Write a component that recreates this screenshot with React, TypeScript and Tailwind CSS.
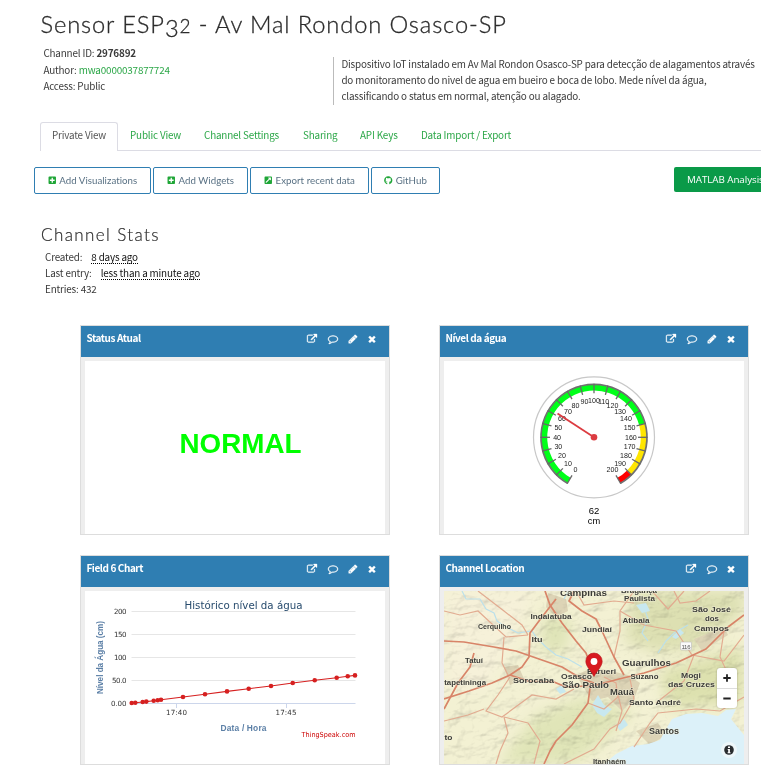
import React from 'react';
import { FaPlusSquare, FaExternalLinkSquareAlt, FaGithub } from 'react-icons/fa';

const LINK =
  'M1408 928v320q0 119-84.5 203.5t-203.5 84.5h-832q-119 0-203.5-84.5t-84.5-203.5v-832q0-119 84.5-203.5t203.5-84.5h704q14 0 23 9t9 23v64q0 14-9 23t-23 9h-704q-66 0-113 47t-47 113v832q0 66 47 113t113 47h832q66 0 113-47t47-113v-320q0-14 9-23t23-9h64q14 0 23 9t9 23zm384-864v512q0 26-19 45t-45 19-45-19l-176-176-652 652q-10 10-23 10t-23-10l-114-114q-10-10-10-23t10-23l652-652-176-176q-19-19-19-45t19-45 45-19h512q26 0 45 19t19 45z';
const COMMENT =
  'M896 384q-204 0-381.5 69.5t-282 187.5-104.5 255q0 112 71.5 213.5t201.5 175.5l87 50-27 96q-24 91-70 172 152-63 275-171l43-38 57 6q69 8 130 8 204 0 381.5-69.5t282-187.5 104.5-255-104.5-255-282-187.5-381.5-69.5zm896 512q0 174-120 321.5t-326 233-450 85.5q-70 0-145-8-198 175-460 242-49 14-114 22h-5q-15 0-27-10.5t-16-27.5v-1q-3-4-.5-12t2-10 4.5-9.5l6-9 7-8.5 8-9q7-8 31-34.5t34.5-38 31-39.5 32.5-51 27-59 26-76q-157-89-247.5-220t-90.5-281q0-174 120-321.5t326-233 450-85.5 450 85.5 326 233 120 321.5z';
const PENCIL =
  'M491 1536l91-91-235-235-91 91v107h128v128h107zm523-928q0-22-22-22-10 0-17 7l-542 542q-7 7-7 17 0 22 22 22 10 0 17-7l542-542q7-7 7-17zm-54-192l416 416-832 832h-416v-416zm683 96q0 53-37 90l-166 166-416-416 166-165q36-38 90-38 53 0 91 38l235 234q37 39 37 91z';
const TIMES =
  'M1490 1322q0 40-28 68l-136 136q-28 28-68 28t-68-28l-294-294-294 294q-28 28-68 28t-68-28l-136-136q-28-28-28-68t28-68l294-294-294-294q-28-28-28-68t28-68l136-136q28-28 68-28t68 28l294 294 294-294q28-28 68-28t68 28l136 136q28 28 28 68t-28 68l-294 294 294 294q28 28 28 68z';

function Icon({ d, shift = '' }: { d: string; shift?: string }) {
  return (
    <svg viewBox="0 0 1792 1792" className={`h-[10px] w-[10px] overflow-visible fill-white stroke-white ${shift}`} strokeWidth="60">
      <path d={d} />
    </svg>
  );
}

function Card({ title, editable = true, children }: { title: string; editable?: boolean; children: React.ReactNode }) {
  return (
    <section className="flex h-[210px] w-[310px] flex-col border border-[#ddd] bg-[#eee]">
      <header className="flex h-[31px] shrink-0 justify-between bg-[#2f7eb2] pr-[12.5px] pl-[5.4px]">
        <h3 className="mt-[4px] text-[10px] leading-[16px] font-bold tracking-[-0.42px] whitespace-nowrap text-white">{title}</h3>
        <div className="mt-[8px] flex gap-[10px]">
          <Icon d={LINK} />
          <Icon d={COMMENT} shift="ml-[1px]" />
          {editable && <Icon d={PENCIL} />}
          <Icon d={TIMES} shift="-ml-[1px]" />
        </div>
      </header>
      <div className="mx-[4px] mt-[4px] flex-1 overflow-hidden bg-white tracking-normal">{children}</div>
    </section>
  );
}

const GX = 150;
const GY = 76.3;
const polar = (r: number, value: number) => {
  const a = ((value * 1.5 - 150) * Math.PI) / 180;
  return [GX + r * Math.sin(a), GY - r * Math.cos(a)];
};
const arc = (r: number, from: number, to: number) => {
  const [x1, y1] = polar(r, from);
  const [x2, y2] = polar(r, to);
  return `M${x1} ${y1}A${r} ${r} 0 ${to - from > 120 ? 1 : 0} 1 ${x2} ${y2}`;
};

function Gauge() {
  const values = Array.from({ length: 21 }, (_, i) => i * 10);
  const [nx, ny] = polar(43.5, 62);
  return (
    <svg width="300" height="173" className="block font-['Liberation_Sans',sans-serif]">
      <circle cx={GX} cy={GY} r="60.5" fill="#fff" stroke="#c8c8c8" strokeWidth="1.2" />
      <path d={arc(49.8, 0, 150)} fill="none" stroke="#00ff19" strokeWidth="6" />
      <path d={arc(49.8, 150, 190)} fill="none" stroke="#ffe600" strokeWidth="6" />
      <path d={arc(49.8, 190, 200)} fill="none" stroke="#f00" strokeWidth="6" />
      <path d={arc(53, 0, 200)} fill="none" stroke="#707070" strokeWidth="1.7" />
      {values.map((v) => {
        const [x1, y1] = polar(53.6, v);
        const [x2, y2] = polar(44, v);
        return <line key={v} x1={x1} y1={y1} x2={x2} y2={y2} stroke="#686868" strokeWidth="1.3" />;
      })}
      {values.map((v) => {
        const [x, y] = polar(36.9, v);
        return (
          <text key={v} x={x} y={y + 2.6} textAnchor="middle" fontSize="7.1" fill="#222">
            {v}
          </text>
        );
      })}
      <line x1={GX} y1={GY} x2={nx} y2={ny} stroke="#dc3c41" strokeWidth="1.8" />
      <circle cx={GX} cy={GY} r="3.3" fill="#dc3c41" />
      <text x="150" y="152.5" textAnchor="middle" fontSize="9.5">62</text>
      <text x="150" y="163" textAnchor="middle" fontSize="9.3">cm</text>
    </svg>
  );
}

const POINTS = [
  [46.7, 112], [50.3, 111.7], [57.7, 111], [61.3, 110.6], [68.7, 109.7], [72.7, 109.3], [76, 108.7],
  [98, 106], [120, 103.3], [142, 100.4], [163.7, 97.7], [186, 95], [207.7, 92], [229.7, 89.3],
  [251.7, 86.7], [262.7, 85.3], [270, 84.4],
];

function Chart() {
  const rows: [string, number, number][] = [
    ['200', 20.5, 12.5], ['150', 43.5, 12.5], ['100', 66.5, 12.5], ['50.0', 89.5, 14.5], ['0.00', 112.5, 15.5],
  ];
  return (
    <svg width="300" height="173" className="block font-['DejaVu_Sans',sans-serif]">
      {rows.map(([label, y, w]) => (
        <g key={label}>
          <line x1="46.5" x2="270.5" y1={y} y2={y} stroke={y > 110 ? '#ccd6eb' : '#e6e6e6'} />
          <text x="41.5" y={y + 2.5} textAnchor="end" fontSize="7.1" textLength={w} fill="#333">{label}</text>
        </g>
      ))}
      <path d="M91.5 113v4M201.5 113v4" stroke="#ccd6eb" />
      <text x="81" y="124" fontSize="7.1" textLength="21" fill="#333">17:40</text>
      <text x="190.5" y="124" fontSize="7.1" textLength="21" fill="#333">17:45</text>
      <text x="99.5" y="18" fontSize="11" textLength="118" lengthAdjust="spacingAndGlyphs" fill="#274b6d">Histórico nível da água</text>
      <text transform="translate(17.5 103) rotate(-90)" fontSize="8.4" fontWeight="bold" textLength="73" className="font-['Liberation_Sans',sans-serif]" lengthAdjust="spacingAndGlyphs" fill="#5b7fa6">Nível da Água (cm)</text>
      <text x="135.5" y="140" fontSize="8.4" fontWeight="bold" textLength="46" className="font-['Liberation_Sans',sans-serif]" fill="#5b7fa6">Data / Hora</text>
      <text x="216.5" y="146" fontSize="7" textLength="54" lengthAdjust="spacingAndGlyphs" fill="#c00">ThingSpeak.com</text>
      <polyline points={POINTS.map((p) => p.join(',')).join(' ')} fill="none" stroke="#d62020" strokeWidth="1.1" />
      {POINTS.map(([x, y]) => (
        <circle key={x} cx={x} cy={y} r="2.3" fill="#d62020" />
      ))}
    </svg>
  );
}

const ROADS_MAJOR = [
  'M0 50L20 51 50 56 72 60 95 68 118 76 138 88 150 92',
  'M101 0L106 14 118 32 132 50 142 62 150 84',
  'M112 8L98 26 86 42 85 66 78 76 66 84 48 92 25 100 0 108',
  'M66 84L84 90 110 91 122 96 140 95 152 94 175 88 200 82 232 72 262 58 284 36 300 24',
  'M146 97L144 112 128 134 112 150 106 160 100 173',
  'M130 0L125 10 138 20 152 28 158 40 170 66 180 84',
  'M0 118L14 92 26 76 30 62',
];
const ROADS_MINOR = [
  'M0 20L16 24 34 20 62 46 84 44', 'M34 0L60 20 78 34 84 44', 'M60 46L58 72 64 84',
  'M66 86L54 104 42 120 58 126 88 104 112 108 130 98', 'M0 130L24 124 40 118', 'M60 126L64 142 56 160 52 173',
  'M60 126L84 132 96 150 90 173', 'M170 66L176 40 176 20 190 0', 'M176 20L200 34 232 40 248 64 280 70 300 44',
  'M144 112L160 118 174 106 172 92 160 86', 'M172 96L178 120 172 140', 'M186 88L190 108 176 132 166 138 150 158 120 173',
  'M190 156L206 132 214 122 252 118 276 120 300 106', 'M250 64L240 90 212 112', 'M230 0L236 12 252 10 266 0',
  'M208 0L224 18 240 0', 'M280 40L276 66 292 100', 'M132 0L140 14 170 10 190 12',
];
const RIVERS = [
  'M18 0L22 8 36 8 42 18 50 22 53 30 62 36 74 42 88 40 92 46 102 56 112 64 124 68 138 76',
  'M200 16L204 28 198 42 204 50', 'M214 62L222 50 230 42 244 34', 'M124 0L120 8',
];
const PLACES: [string, number, number, number, number][] = [
  ['Campinas', 116, 4.5, 47, 8.5], ['Bragança', 177, 1.5, 36, 7.4], ['Paulista', 180, 9.5, 31, 7.6],
  ['Indaiatuba', 86.5, 28, 41, 7.6], ['Atibaia', 178.5, 31.5, 27, 7.6], ['São José', 248, 20.5, 39, 8],
  ['dos', 261, 30, 14, 8], ['Campos', 250, 39.5, 35, 8], ['Cerquilho', 34, 38, 33, 7.5],
  ['Jundiaí', 138, 41, 30, 8], ['Itu', 87.5, 51, 11, 7.7], ['Tatuí', 21, 72, 18, 7.5],
  ['Guarulhos', 178, 75, 49, 9.6], ['Barueri', 143, 83, 29, 7.6], ['Osasco', 117, 87.5, 31, 8],
  ['São Paulo', 118, 96.5, 47, 9.2], ['Sorocaba', 69, 91.5, 41, 8], ['Itapetininga', -2, 93.5, 44, 7.6],
  ['Suzano', 186.5, 87.5, 28, 7.7], ['Mogi', 237, 86.5, 20, 8], ['das Cruzes', 224, 96, 47, 8],
  ['Mauá', 166, 104, 24, 8.2], ['Santo André', 185, 114, 52, 8], ['Santos', 205, 143, 30, 8.4],
  ['Itanhaém', 149, 172.5, 33, 7.4], ['to', 0.5, 149, 8, 7.5],
];

function MapView() {
  return (
    <div className="relative h-[173px] w-[300px]">
      <svg width="300" height="173" className="block font-['Liberation_Sans',sans-serif]">
        <defs>
          <filter id="relief" x="0" y="0" width="100%" height="100%">
            <feTurbulence type="fractalNoise" baseFrequency="0.05 0.08" numOctaves="4" seed="8" result="n" />
            <feDiffuseLighting in="n" surfaceScale="5" diffuseConstant="1.15" lightingColor="#fff">
              <feDistantLight azimuth="225" elevation="60" />
            </feDiffuseLighting>
          </filter>
          <filter id="soft" x="-20%" y="-20%" width="140%" height="140%">
            <feGaussianBlur stdDeviation="7" />
          </filter>
        </defs>
        <rect width="300" height="173" fill="#f3f1d3" />
        <g filter="url(#soft)">
          <path d="M0 0H90L70 50 40 100H0Z" fill="#f6f1d9" />
          <path d="M55 173L90 125 140 105 190 120 160 150 130 173Z" fill="#e0e5b8" />
          <path d="M190 0H300V20L260 55 215 62 180 50Z" fill="#dde0b2" />
          <path d="M215 80L300 55V112L225 118Z" fill="#dde1af" />
          <path d="M100 22L128 28 122 62 96 60Z" fill="#dfe4b7" />
        </g>
        <g fill="#ddd4b6">
          <path d="M132 84L150 76 184 84 196 92 190 108 178 120 164 106 148 110Z" />
          <path d="M104 2L122 8 124 20 112 26 102 16Z" />
          <path d="M60 76L74 74 80 88 66 94Z" />
          <path d="M250 48L280 36 284 44 258 60Z" />
          <path d="M192 140L214 132 222 144 206 154Z" />
        </g>
        <rect width="300" height="173" filter="url(#relief)" className="opacity-30 mix-blend-multiply" />
        <g fill="none" stroke="#bce0ea" strokeWidth="1.2">
          {RIVERS.map((d) => <path key={d} d={d} />)}
        </g>
        <g fill="#c8e8ef">
          <path d="M112 98L118 94 122 101 116 103Z" />
          <path d="M148 114L154 104 160 114 168 118 160 126 153 122Z" />
          <path d="M172 134L180 128 184 134 176 140Z" />
          <path d="M192 14L202 12 206 20 198 22Z" />
          <path d="M228 46L236 38 240 42 232 48Z" />
        </g>
        <path d="M160 173L172 163 188 155 204 153 216 149 222 138 228 128 242 123 258 122 274 125 282 119 292 118 287 128 300 144V173Z" fill="#dcf1f9" />
        <g fill="none" stroke="#e2ab90" strokeWidth="1.2">
          {ROADS_MINOR.map((d) => <path key={d} d={d} />)}
        </g>
        <g fill="none" stroke="#d88468" strokeWidth="1.7" strokeLinejoin="round">
          {ROADS_MAJOR.map((d) => <path key={d} d={d} />)}
        </g>
        <rect x="236.5" y="51" width="11" height="8" rx="1" fill="#fafafa" stroke="#bbb" strokeWidth=".6" />
        <text x="237.5" y="57.5" fontSize="6" textLength="9" fill="#555">116</text>
        <g fill="#3c3c38" stroke="#f5f3dd" strokeWidth="1.2" strokeOpacity=".65" fontWeight="bold" className="[paint-order:stroke]">
          {PLACES.map(([name, x, y, w, size]) => (
            <text key={name} x={x} y={y} fontSize={size} textLength={w} lengthAdjust="spacingAndGlyphs">{name}</text>
          ))}
        </g>
        <path d="M150 85.5C147 79.5 141.8 75.5 141.8 70.2a8.2 8.2 0 0 1 16.4 0C158.2 75.5 153 79.5 150 85.5Z" fill="#d71920" stroke="#b5161c" strokeWidth=".6" />
        <circle cx="150" cy="70.5" r="3.4" fill="#fff" />
      </svg>
      <div className="absolute top-[77px] left-[273px] h-[40px] w-[20px] rounded-[3px] bg-white shadow-[0_0_2px_rgba(0,0,0,0.3)]">
        <svg viewBox="0 0 20 40" className="h-[40px] w-[20px]">
          <path d="M6.3 10h7.4M10 6.3v7.4M6.3 30.5h7.4" stroke="#222" strokeWidth="1.8" />
          <path d="M0 20.5h20" stroke="#ddd" />
        </svg>
      </div>
      <svg viewBox="0 0 16 16" className="absolute top-[151px] left-[277px] h-[16px] w-[16px]">
        <circle cx="8" cy="8" r="8" fill="#eef7fa" />
        <circle cx="8" cy="8" r="4.8" fill="#2a2d30" />
        <path d="M7 4.6h2v1.5H7zM6.7 7h2.2v3.2h.6v1H6.6v-1h.6V8h-.5z" fill="#fff" />
      </svg>
    </div>
  );
}

function ToolButton({ icon, label, width }: { icon: React.ReactNode; label: string; width: string }) {
  return (
    <button className={`flex h-[27px] shrink-0 items-center justify-center gap-[3px] rounded-[2px] border border-[#2f7eb2] bg-white font-['Lato',sans-serif] text-[9.7px] tracking-[0.04px] whitespace-nowrap text-[#587083] ${width}`}>
      <span className="text-[8.5px] leading-none text-[#1fa637] [&>svg]:block">{icon}</span>
      <span className="-mt-px">{label}</span>
    </button>
  );
}

export default function App() {
  return (
    <div className="h-[775px] w-[761px] overflow-hidden bg-white font-['Noto_Sans_CJK_SC','Open_Sans',sans-serif] text-[9.9px] leading-[16px] tracking-[-0.17px] text-[#3a3a3a]">
      <h1 className="flex h-[46px] items-baseline pt-[8px] pl-[40.5px] font-['Lato',sans-serif] text-[23.7px] leading-[32px] font-light tracking-[0.88px] whitespace-pre text-[#2c2c2c] [-webkit-text-stroke:0.3px_#2c2c2c]">
        Sensor ESP<span className="translate-y-[4px]">3</span><span className="text-[19px]">2</span> - Av Mal Rondon Osasco-SP
      </h1>
      <div className="flex h-[76px]">
        <div className="-mt-[1px] w-[333px] shrink-0 pl-[43.4px] leading-[16.5px]">
          <p>Channel ID: <b>2976892</b></p>
          <p>Author: <span className="text-[#2ca748]">mwa0000037877724</span></p>
          <p>Access: Public</p>
        </div>
        <div className="mt-[11px] h-[48px] shrink-0 border-l border-[#bbb] pl-[7.4px] whitespace-nowrap">
          <p className="-mt-[1px]">
            Dispositivo IoT instalado em Av Mal Rondon Osasco-SP para detecção de alagamentos através<br />
            do monitoramento do nivel de agua em bueiro e boca de lobo. Mede nível da água,<br />
            classificando o status em normal, atenção ou alagado.
          </p>
        </div>
      </div>
      <nav className="ml-[40px] flex h-[29px] border-b border-[#dcdce4] leading-[27px] whitespace-nowrap text-[#2ca748]">
        <span className="h-[29px] w-[78px] rounded-t-[3px] border border-b-0 border-[#dcdce4] bg-white text-center leading-[24px] text-[#555]">Private View</span>
        <span className="w-[74px] pl-[12px]">Public View</span>
        <span className="w-[99px] pl-[12px]">Channel Settings</span>
        <span className="w-[57px] pl-[12px]">Sharing</span>
        <span className="w-[61px] pl-[12px]">API Keys</span>
        <span className="pl-[12px]">Data Import / Export</span>
      </nav>
      <div className="flex h-[71px] gap-[2px] pt-[16px] pl-[34px]">
        <ToolButton width="w-[117px]" icon={<FaPlusSquare />} label="Add Visualizations" />
        <ToolButton width="w-[95px]" icon={<FaPlusSquare />} label="Add Widgets" />
        <ToolButton width="w-[119px]" icon={<FaExternalLinkSquareAlt />} label="Export recent data" />
        <ToolButton width="w-[69px]" icon={<FaGithub />} label="GitHub" />
        <button className="ml-[232px] h-[25px] w-[100px] shrink-0 rounded-[2px] bg-[#0a9a48] pl-[13px] text-left font-['Open_Sans',sans-serif] text-[9.8px] tracking-[-0.05px] whitespace-nowrap text-white">MATLAB Analysis</button>
      </div>
      <h2 className="h-[27px] pt-[2px] pl-[41px] font-['Lato',sans-serif] text-[17px] leading-[22px] font-light tracking-[1.4px] text-[#2c2c2c] [-webkit-text-stroke:0.2px_#2c2c2c]">Channel Stats</h2>
      <div className="h-[76px] pl-[45px] whitespace-nowrap">
        <p className="flex h-[16px] gap-[9px]">Created: <span className="h-[15px] border-b border-dotted border-black text-[#111]">8 days ago</span></p>
        <p className="flex h-[16px] gap-[9px]">Last entry: <span className="h-[15px] border-b border-dotted border-black text-[#111]">less than a minute ago</span></p>
        <p>Entries: 432</p>
      </div>
      <main className="grid grid-cols-[310px_310px] gap-x-[49px] gap-y-[20px] pl-[80px]">
        <Card title="Status Atual">
          <div className="flex h-[165px] items-center justify-center pl-[11px] font-['Liberation_Sans',sans-serif] text-[27.8px] font-bold text-[#0f0]">NORMAL</div>
        </Card>
        <Card title="Nível da água"><Gauge /></Card>
        <Card title="Field 6 Chart"><Chart /></Card>
        <Card title="Channel Location" editable={false}><MapView /></Card>
      </main>
    </div>
  );
}
